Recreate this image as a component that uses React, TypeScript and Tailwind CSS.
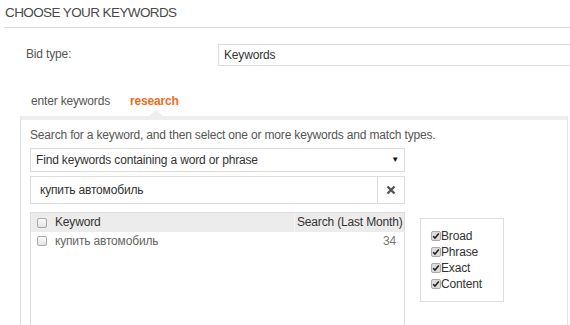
import React from "react";

function Box({ checked }: { checked?: boolean }) {
  return (
    <span
      className={
        "inline-flex items-center justify-center w-[10px] h-[10px] rounded-[2px] border border-[#a9a9a9] shrink-0 " +
        (checked ? "bg-[#dcdcdc]" : "bg-gradient-to-b from-[#fbfbfb] to-[#e4e4e4]")
      }
    >
      {checked && (
        <svg width="8" height="8" viewBox="0 0 8 8">
          <path d="M1.2 4.2 L3 6 L6.8 1.6" fill="none" stroke="#222" strokeWidth="1.6" />
        </svg>
      )}
    </span>
  );
}

export default function App() {
  return (
    <div
      className="w-[570px] h-[325px] overflow-hidden bg-white text-[12px] tracking-[-0.17px]"
      style={{ fontFamily: '"Liberation Sans", Arial, sans-serif' }}
    >
      <div className="ml-[4px] pl-[1px] pt-[4px] pb-[5px] leading-[18px] text-[13.5px] tracking-[-0.6px] text-[#4a4a4a] border-b border-[#ddd]">
        CHOOSE YOUR KEYWORDS
      </div>

      <div className="mt-[16px] flex items-start">
        <div className="w-[218px] pl-[26px] pt-[2px] leading-[16px] text-[#555]">Bid type:</div>
        <div className="flex-1 h-[22px] border border-[#ddd] border-r-0 pl-[5px] leading-[20px] text-[#333]">
          Keywords
        </div>
      </div>

      <div className="mt-[27px] flex leading-[16px] pl-[31px] gap-[20px]">
        <span className="text-[#555]">enter keywords</span>
        <span className="font-bold text-[#ef6c1a]">research</span>
      </div>

      <div className="relative mt-[7px] ml-[20px] w-[548px] h-[220px] border-t-[4px] border-t-[#eee] border-x border-x-[#e3e3e3]">
        <div className="absolute left-[128px] top-[-10px] w-0 h-0 border-l-[7px] border-r-[7px] border-b-[6px] border-l-transparent border-r-transparent border-b-[#eee]" />
        <div className="pl-[9px] pt-[8px]">
          <div className="leading-[14px] text-[#555]">
            Search for a keyword, and then select one or more keywords and match types.
          </div>
          <div className="mt-[6px] w-[375px] h-[24px] border border-[#ddd] flex items-center justify-between pl-[5px] pr-[5px] text-[#333]">
            <span>Find keywords containing a word or phrase</span>
            <span className="text-[8px] text-[#111]">▼</span>
          </div>
          <div className="mt-[4px] w-[375px] h-[28px] border border-[#ddd] flex text-[#333]">
            <div className="flex-1 pl-[9px] flex items-center">купить автомобиль</div>
            <div className="w-[27px] border-l border-[#ddd] flex items-center justify-center">
              <svg width="10" height="10" viewBox="0 0 10 10">
                <path d="M1.5 1.5 L8.5 8.5 M8.5 1.5 L1.5 8.5" stroke="#555" strokeWidth="2.4" />
              </svg>
            </div>
          </div>

          <div className="mt-[8px] flex items-start gap-[15px]">
            <div className="w-[375px] h-[120px] border border-[#ddd] border-b-0">
              <div className="flex h-[19px] bg-[#ececec] text-[#333] leading-[19px]">
                <div className="w-[263px] flex items-center gap-[8px] pl-[6px]">
                  <Box />
                  <span>Keyword</span>
                </div>
                <div className="flex-1 border-l border-[#f6f6f6] pl-[2px] whitespace-nowrap overflow-hidden">
                  Search (Last Month)
                </div>
              </div>
              <div className="flex h-[18px] leading-[18px] text-[#666]">
                <div className="w-[263px] flex items-center gap-[8px] pl-[6px]">
                  <Box />
                  <span>купить автомобиль</span>
                </div>
                <div className="flex-1 text-right pr-[8px] text-[#777]">34</div>
              </div>
            </div>
            <div className="mt-[6px] w-[84px] h-[84px] border border-[#ddd] pl-[10px] pt-[9px] text-[#333] leading-[16px]">
              {["Broad", "Phrase", "Exact", "Content"].map((l) => (
                <div key={l} className="flex items-center">
                  <Box checked />
                  <span>{l}</span>
                </div>
              ))}
            </div>
          </div>
        </div>
      </div>
    </div>
  );
}
